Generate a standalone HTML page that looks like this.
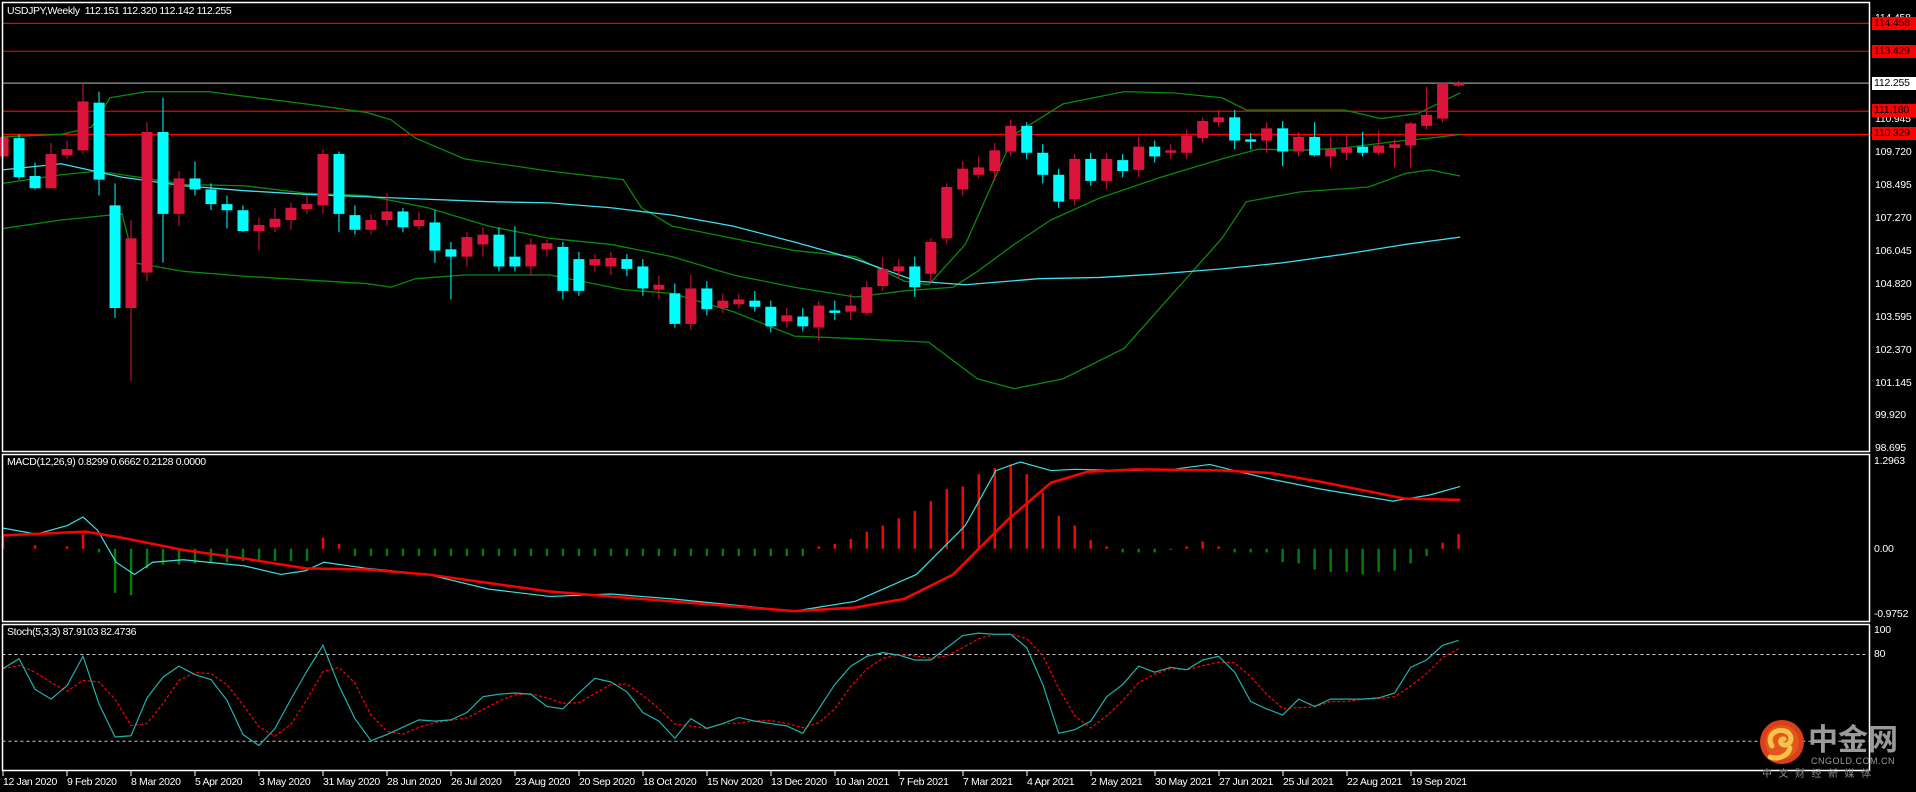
<!DOCTYPE html>
<html><head><meta charset="utf-8">
<style>
html,body{margin:0;padding:0;background:#000;width:1916px;height:792px;overflow:hidden;}
body{position:relative;font-family:"Liberation Sans",Tahoma,sans-serif;font-size:11px;color:#fff;}
.t{position:absolute;white-space:nowrap;font-size:10.5px;letter-spacing:-0.35px;line-height:12px;}
.ax{position:absolute;left:1875px;white-space:nowrap;font-size:10.5px;letter-spacing:-0.2px;line-height:12px;color:#fff;}
.box{position:absolute;left:1872px;width:42px;height:13px;font-size:10.5px;letter-spacing:-0.2px;line-height:13px;color:#000;padding-left:2px;}
svg{position:absolute;left:0;top:0;}
</style></head><body>
<svg id="c" width="1916" height="792" viewBox="0 0 1568 648" preserveAspectRatio="none"></svg>
<svg width="1916" height="792" viewBox="0 0 1916 792" style="pointer-events:none">
 <g fill="none" stroke="#fff" stroke-width="1.5">
  <rect x="2.5" y="2.5" width="1867" height="449"/>
  <rect x="2.5" y="454.5" width="1867" height="167"/>
  <rect x="2.5" y="624.5" width="1867" height="146"/>
 </g>
 <g stroke="#fff" stroke-width="1">
  <line x1="3" y1="771" x2="3" y2="776"/><line x1="67" y1="771" x2="67" y2="776"/><line x1="131" y1="771" x2="131" y2="776"/><line x1="195" y1="771" x2="195" y2="776"/><line x1="259" y1="771" x2="259" y2="776"/><line x1="323" y1="771" x2="323" y2="776"/><line x1="387" y1="771" x2="387" y2="776"/><line x1="451" y1="771" x2="451" y2="776"/><line x1="515" y1="771" x2="515" y2="776"/><line x1="579" y1="771" x2="579" y2="776"/><line x1="643" y1="771" x2="643" y2="776"/><line x1="707" y1="771" x2="707" y2="776"/><line x1="771" y1="771" x2="771" y2="776"/><line x1="835" y1="771" x2="835" y2="776"/><line x1="899" y1="771" x2="899" y2="776"/><line x1="963" y1="771" x2="963" y2="776"/><line x1="1027" y1="771" x2="1027" y2="776"/><line x1="1091" y1="771" x2="1091" y2="776"/><line x1="1155" y1="771" x2="1155" y2="776"/><line x1="1219" y1="771" x2="1219" y2="776"/><line x1="1283" y1="771" x2="1283" y2="776"/><line x1="1347" y1="771" x2="1347" y2="776"/><line x1="1411" y1="771" x2="1411" y2="776"/>
 </g>
 <circle cx="1782" cy="742" r="22" fill="#d8401a"/>
 <circle cx="1782" cy="742" r="17" fill="#e2561c"/>
 <path d="M1772 746 C1766 736 1776 728 1785 731 C1794 734 1792 746 1784 745 C1779 744 1780 738 1784 739 M1790 748 C1788 756 1778 760 1770 757" fill="none" stroke="#f7c24a" stroke-width="5" stroke-linecap="round"/>
</svg>

<div class="t" style="left:7px;top:5px;">USDJPY,Weekly&nbsp; 112.151 112.320 112.142 112.255</div>
<div class="t" style="left:7px;top:456px;">MACD(12,26,9) 0.8299 0.6662 0.2128 0.0000</div>
<div class="t" style="left:7px;top:626px;">Stoch(5,3,3) 87.9103 82.4736</div>

<div class="ax" style="top:12px">114.458</div>
<div class="ax" style="top:113px">110.945</div>
<div class="ax" style="top:146px">109.720</div>
<div class="ax" style="top:179px">108.495</div>
<div class="ax" style="top:212px">107.270</div>
<div class="ax" style="top:245px">106.045</div>
<div class="ax" style="top:278px">104.820</div>
<div class="ax" style="top:311px">103.595</div>
<div class="ax" style="top:344px">102.370</div>
<div class="ax" style="top:377px">101.145</div>
<div class="ax" style="top:409px">99.920</div>
<div class="ax" style="top:442px">98.695</div>
<div class="box" style="top:17px;background:#f00">114.458</div>
<div class="box" style="top:45px;background:#f00">113.429</div>
<div class="box" style="top:77px;background:#fff">112.255</div>
<div class="box" style="top:104px;background:#f00">111.180</div>
<div class="box" style="top:127px;background:#f00">110.329</div>
<div class="ax" style="left:1874px;top:455px">1.2963</div>
<div class="ax" style="left:1874px;top:543px">0.00</div>
<div class="ax" style="left:1874px;top:608px">-0.9752</div>
<div class="ax" style="left:1874px;top:624px">100</div>
<div class="ax" style="left:1874px;top:648px">80</div>

<div class="t" style="left:1808px;top:720px;font-family:'Noto Sans CJK SC','WenQuanYi Zen Hei',sans-serif;font-size:30px;letter-spacing:0;line-height:34px;font-weight:bold;color:#9a9a9a;">中金网</div>
<div class="t" style="left:1811px;top:756px;font-size:9px;line-height:10px;color:#9a9a9a;letter-spacing:0.5px;">CNGOLD.COM.CN</div>
<div class="t" style="left:1762px;top:767px;font-family:'Noto Sans CJK SC',sans-serif;font-size:10px;line-height:12px;color:#8a8a8a;letter-spacing:6.5px;">中文财经新媒体</div>

<div class="t" style="left:3px;top:776px">12 Jan 2020</div>
<div class="t" style="left:67px;top:776px">9 Feb 2020</div>
<div class="t" style="left:131px;top:776px">8 Mar 2020</div>
<div class="t" style="left:195px;top:776px">5 Apr 2020</div>
<div class="t" style="left:259px;top:776px">3 May 2020</div>
<div class="t" style="left:323px;top:776px">31 May 2020</div>
<div class="t" style="left:387px;top:776px">28 Jun 2020</div>
<div class="t" style="left:451px;top:776px">26 Jul 2020</div>
<div class="t" style="left:515px;top:776px">23 Aug 2020</div>
<div class="t" style="left:579px;top:776px">20 Sep 2020</div>
<div class="t" style="left:643px;top:776px">18 Oct 2020</div>
<div class="t" style="left:707px;top:776px">15 Nov 2020</div>
<div class="t" style="left:771px;top:776px">13 Dec 2020</div>
<div class="t" style="left:835px;top:776px">10 Jan 2021</div>
<div class="t" style="left:899px;top:776px">7 Feb 2021</div>
<div class="t" style="left:963px;top:776px">7 Mar 2021</div>
<div class="t" style="left:1027px;top:776px">4 Apr 2021</div>
<div class="t" style="left:1091px;top:776px">2 May 2021</div>
<div class="t" style="left:1155px;top:776px">30 May 2021</div>
<div class="t" style="left:1219px;top:776px">27 Jun 2021</div>
<div class="t" style="left:1283px;top:776px">25 Jul 2021</div>
<div class="t" style="left:1347px;top:776px">22 Aug 2021</div>
<div class="t" style="left:1411px;top:776px">19 Sep 2021</div>

<script>
var svg=document.getElementById('c');var h='';
function X(i){return 2.5+13.09*i;}
function L(x1,y1,x2,y2,c,w,extra){h+='<line x1="'+x1+'" y1="'+y1+'" x2="'+x2+'" y2="'+y2+'" stroke="'+c+'" stroke-width="'+(w||1)+'" vector-effect="non-scaling-stroke" '+(extra||'')+'/>';}
function P(pts,c,w,extra){h+='<polyline points="'+pts.map(function(p){return p[0]+','+p[1];}).join(' ')+'" fill="none" stroke="'+c+'" stroke-width="'+(w||1)+'" vector-effect="non-scaling-stroke" '+(extra||'')+'/>';}
L(2,19.1,1530,19.1,'#e00',1.2);L(2,42,1530,42,'#e00',1.2);L(2,68,1530,68,'#999',1.2);L(2,91,1530,91,'#e00',1.2);L(2,110,1530,110,'#f00',1.5);
P([[2,150],[50,143],[80,140],[120,146],[150,151],[200,152],[250,158],[300,160],[350,170],[400,185],[450,195],[500,200],[550,210],[600,225],[650,235],[700,243],[740,238],[780,235],[800,222],[830,200],[860,180],[900,162],[950,145],[1000,130],[1030,122],[1064,123],[1100,121],[1140,116],[1170,113],[1195,110]],'#0a8a0a',1.3);
P([[2,112],[50,110],[75,104],[90,80],[120,75],[170,75],[250,85],[300,92],[320,98],[340,113],[380,130],[450,140],[510,147],[525,170],[550,185],[600,195],[650,205],[700,210],[740,230],[760,233],[790,200],[830,110],[870,85],[920,75],[960,76],[1000,80],[1020,90],[1064,90],[1100,90],[1130,97],[1160,93],[1195,76]],'#0a8a0a',1.3);
P([[2,187],[50,180],[100,175],[110,215],[150,222],[200,226],[300,232],[320,235],[340,228],[380,225],[450,225],[510,237],[550,240],[600,255],[650,275],[700,277],[760,280],[800,310],[830,318],[870,310],[920,285],[960,240],[1000,195],[1020,165],[1064,157],[1120,153],[1150,142],[1170,139],[1195,144]],'#0a8a0a',1.3);
P([[2,139],[50,134],[100,145],[150,152],[200,156],[250,159],[300,161],[350,163],[400,165],[450,166],[500,170],[550,176],[600,185],[650,198],[700,212],[750,230],[790,233],[850,228],[900,227],[950,224],[1000,220],[1050,215],[1100,208],[1150,200],[1195,194]],'#3fe0f0',1.3);
var C=[[112,128,110,130,'r'],[113,145,110,147,'c'],[144,154,133,155,'c'],[126,154,117,154,'r'],[122,127,115,130,'r'],[83,123,68,126,'r'],[84,147,75,160,'c'],[168,252,150,260,'c'],[195,252,180,312,'r'],[108,223,100,230,'r'],[108,175,80,215,'c'],[146,175,140,185,'r'],[146,155,132,160,'c'],[155,167,150,172,'c'],[167,172,160,187,'c'],[172,189,168,190,'c'],[184,189,178,205,'r'],[179,186,170,190,'r'],[170,180,166,188,'r'],[167,171,160,175,'r'],[126,168,122,175,'r'],[126,175,124,190,'c'],[176,188,168,192,'c'],[180,188,175,192,'r'],[173,180,158,185,'r'],[173,186,170,190,'c'],[180,185,173,188,'r'],[182,205,172,215,'c'],[204,210,198,245,'c'],[194,210,190,218,'r'],[192,200,186,210,'r'],[192,218,186,222,'c'],[210,218,185,222,'c'],[200,218,195,225,'r'],[199,204,196,210,'r'],[202,238,198,245,'c'],[212,238,206,242,'c'],[212,217,208,222,'r'],[211,218,206,225,'r'],[212,220,208,226,'c'],[218,236,212,242,'c'],[233,237,226,245,'r'],[240,265,232,268,'c'],[236,265,225,270,'r'],[236,253,230,258,'c'],[246,252,240,256,'r'],[245,249,240,252,'r'],[246,251,238,255,'c'],[251,267,246,272,'c'],[258,263,252,268,'r'],[259,267,252,271,'c'],[250,268,246,279,'r'],[254,256,246,262,'c'],[250,255,240,262,'r'],[235,256,230,258,'r'],[220,234,210,238,'r'],[218,222,212,228,'r'],[218,235,210,243,'c'],[198,224,195,232,'r'],[153,195,150,200,'r'],[138,155,132,160,'r'],[137,143,128,146,'r'],[123,140,117,148,'r'],[103,124,98,128,'r'],[103,125,100,130,'c'],[125,143,118,150,'c'],[143,165,138,170,'c'],[130,163,126,168,'r'],[130,148,125,152,'c'],[130,148,125,155,'r'],[131,140,126,145,'c'],[120,139,112,145,'r'],[120,128,115,133,'c'],[123,125,118,130,'r'],[111,125,106,130,'r'],[99,113,96,117,'r'],[96,100,90,104,'r'],[96,115,90,122,'c'],[114,116,109,122,'c'],[105,115,100,125,'r'],[105,124,99,136,'c'],[112,124,108,128,'r'],[112,127,100,128,'c'],[122,128,112,137,'r'],[121,125,111,131,'r'],[120,125,108,128,'c'],[119,125,107,127,'r'],[118,121,114,137,'r'],[101,119,100,137,'r'],[94,103,71,106,'r'],[68,97,68,100,'r'],[68,70,66,71,'r']];
for(var i=0;i<C.length;i++){var c=C[i],x=X(i),col=c[4]=='r'?'#dc143c':'#00ffff';
 L(x,c[2],x,c[3],col,1);
 var bh=Math.max(c[1]-c[0],1.2);h+='<rect x="'+(x-4.5)+'" y="'+c[0]+'" width="9" height="'+bh+'" fill="'+col+'"/>';}
var Hs=[437,449,446,449,447,437,452,485,487,465,462,462,461,460,460,459,459,459,459,459,440,445,455,455,455,455,455,455,455,455,455,455,455,455,455,455,455,455,455,455,455,455,455,455,455,455,455,455,455,455,455,447,445,441,435,430,424,418,410,400,398,388,383,380,388,403,422,430,442,447,452,452,452,450,447,443,447,452,452,452,460,461,466,468,468,470,468,467,461,455,444,437];
for(var i=0;i<Hs.length;i++){var v=Hs[i];if(v==449)continue;var col=v<449?'#f00':'#008000';h+='<rect x="'+(X(i)-1)+'" y="'+Math.min(v,449)+'" width="2" height="'+Math.abs(v-449)+'" fill="'+col+'"/>';}
P([[2,432],[30,437],[55,430],[68,423],[80,434],[95,460],[110,470],[125,460],[150,458],[200,463],[230,470],[250,467],[265,460],[300,465],[350,470],[400,482],[450,488],[500,486],[550,490],[600,495],[650,500],[700,492],[750,470],[790,430],[815,385],[835,378],[860,385],[880,384],[920,385],[960,384],[990,380],[1010,385],[1040,392],[1080,400],[1140,410],[1170,405],[1195,398]],'#40e0e0',1.2);
P([[2,438],[70,435],[100,440],[150,450],[200,457],[250,465],[300,466],[350,470],[400,477],[450,484],[500,488],[550,492],[600,496],[650,500],[700,497],[740,490],[780,470],[825,425],[860,395],[890,386],[930,384],[1000,385],[1040,387],[1080,394],[1120,402],[1150,408],[1195,409]],'#f00',2.5);
L(2,535.5,1530,535.5,'#ccc',1,'stroke-dasharray="3,3"');L(2,606.5,1530,606.5,'#ccc',1,'stroke-dasharray="3,3"');
var S=[547,539,564,572,561,537,576,603,602,571,554,545,552,556,573,601,610,596,572,549,528,561,588,606,601,595,589,590,589,583,570,568,567,568,578,580,567,555,558,566,583,590,604,588,596,592,587,590,592,594,600,580,560,545,537,534,536,540,540,530,520,518,519,519,530,560,600,597,590,570,560,545,550,546,548,540,537,550,574,580,585,572,578,572,572,572,571,567,546,540,528,524];
var sp=[],dp=[];for(var i=0;i<S.length;i++){sp.push([X(i),S[i]]);var a=S[Math.max(i-2,0)],b=S[Math.max(i-1,0)];dp.push([X(i),(a+b+S[i])/3]);}
P(dp,'#f00',1.2,'stroke-dasharray="3,2"');P(sp,'#20b2aa',1.2);
svg.innerHTML=h;
</script>
</body></html>
